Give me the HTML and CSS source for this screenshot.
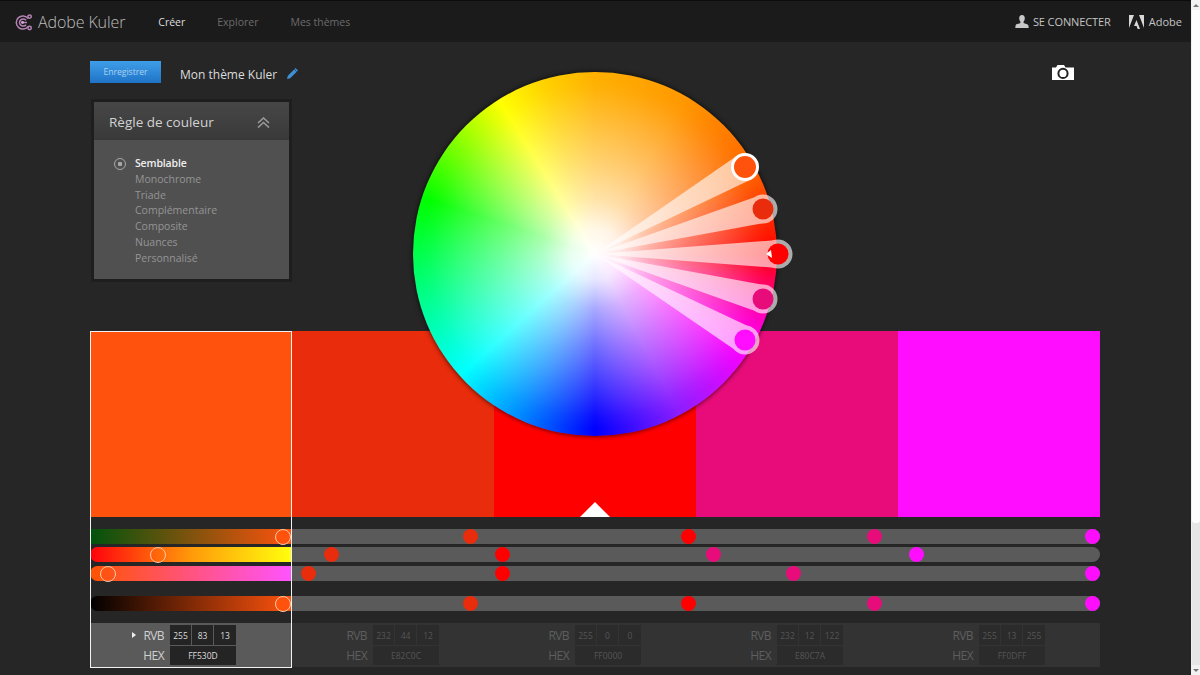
FILE: index.html
```html
<!DOCTYPE html>
<html lang="fr">
<head>
<meta charset="utf-8">
<title>Adobe Kuler</title>
<link rel="stylesheet" href="styles.css">
</head>
<body>
<div class="page">
  <header class="topbar">
    <div class="brand">
      <svg class="logo" viewBox="0 0 18 18" width="18" height="18">
        <g fill="none" stroke="#b583b5" stroke-width="1.5">
          <path d="M13.2 5.6A6.6 6.6 0 1 0 13.2 13.4"/>
          <path d="M11 7.3A3.6 3.6 0 1 0 11 11.7"/>
          <circle cx="14.6" cy="3.6" r="1.7"/>
          <circle cx="14.6" cy="15" r="1.7"/>
          <path d="M6 9.5H12"/>
        </g>
        <circle cx="7.6" cy="9.5" r="1.4" fill="#d7a6d7"/>
      </svg>
      <span class="brand-name">Adobe Kuler</span>
    </div>
    <nav class="nav">
      <a class="nav-link active">Créer</a>
      <a class="nav-link">Explorer</a>
      <a class="nav-link">Mes thèmes</a>
    </nav>
    <div class="account">
      <svg class="user-icon" viewBox="0 0 14 13" width="14" height="13">
        <path d="M7 0C5 0 4.2 1.4 4.2 3.2 4.2 5 5 6 5.4 6.6V8C4 8.8 1 9 .6 10.4L.3 13H13.7L13.4 10.4C13 9 10 8.8 8.6 8V6.6C9 6 9.8 5 9.8 3.2 9.8 1.4 9 0 7 0Z" fill="#c8c8c8"/>
      </svg>
      <span class="signin">SE CONNECTER</span>
      <svg class="adobe-icon" viewBox="0 0 15 14" width="15" height="14">
        <path d="M0 0H5L0 13Z M10 0H15V13Z M7.5 5L11 14H8.7L7.6 11H5Z" fill="#d8d8d8"/>
      </svg>
      <span class="adobe-name">Adobe</span>
    </div>
  </header>

  <main class="workspace">
    <section class="upper">
      <div class="toolbar">
        <button class="save">Enregistrer</button>
        <span class="theme-name">Mon thème Kuler</span>
        <svg class="pencil" viewBox="0 0 13 13" width="13" height="13">
          <path d="M9.6 1 12 3.4 4.2 11.2 1 12 1.8 8.8Z" fill="#3f8fd6"/>
          <path d="M8.4 2.2 10.8 4.6" stroke="#1f2f40" stroke-width=".8"/>
        </svg>
        <svg class="camera" viewBox="0 0 22 15" width="22" height="15">
          <path d="M0 2.5H4L5.5 0H12L13.5 2.5H22V15H0Z" fill="#fff"/>
          <circle cx="11" cy="8.4" r="4.6" fill="#fff" stroke="#222" stroke-width="2"/>
        </svg>
      </div>
      <aside class="rules">
        <div class="rules-head">
          <span class="rules-title">Règle de couleur</span>
          <svg class="chevrons" viewBox="0 0 13 11" width="13" height="11">
            <path d="M1 6 6.5 1 12 6M1 10.5 6.5 5.5 12 10.5" fill="none" stroke="#9a9a9a" stroke-width="1.6"/>
          </svg>
        </div>
        <ul class="rules-list">
          <li class="rule current"><span class="radio"></span>Semblable</li>
          <li class="rule">Monochrome</li>
          <li class="rule">Triade</li>
          <li class="rule">Complémentaire</li>
          <li class="rule">Composite</li>
          <li class="rule">Nuances</li>
          <li class="rule">Personnalisé</li>
        </ul>
      </aside>
    </section>

    <section class="swatches">
      <div class="swatch s1"></div>
      <div class="swatch s2"></div>
      <div class="swatch s3"><span class="base-mark"></span></div>
      <div class="swatch s4"></div>
      <div class="swatch s5"></div>
    </section>

    <section class="sliders">
      <div class="slider row-r">
        <div class="slider-lead lead-r"><span class="handle" style="left:185px"></span></div>
        <div class="slider-rest">
          <span class="dot d2" style="left:171px"></span><span class="dot d3" style="left:389px"></span><span class="dot d4" style="left:575px"></span><span class="dot d5" style="left:793px"></span>
        </div>
      </div>
      <div class="slider row-g">
        <div class="slider-lead lead-g"><span class="handle" style="left:60px"></span></div>
        <div class="slider-rest">
          <span class="dot d2" style="left:32px"></span><span class="dot d3" style="left:203px"></span><span class="dot d4" style="left:414px"></span><span class="dot d5" style="left:617px"></span>
        </div>
      </div>
      <div class="slider row-b">
        <div class="slider-lead lead-b"><span class="handle" style="left:10px"></span></div>
        <div class="slider-rest">
          <span class="dot d2" style="left:9px"></span><span class="dot d3" style="left:203px"></span><span class="dot d4" style="left:494px"></span><span class="dot d5" style="left:793px"></span>
        </div>
      </div>
      <div class="slider row-l">
        <div class="slider-lead lead-l"><span class="handle" style="left:185px"></span></div>
        <div class="slider-rest">
          <span class="dot d2" style="left:171px"></span><span class="dot d3" style="left:389px"></span><span class="dot d4" style="left:575px"></span><span class="dot d5" style="left:793px"></span>
        </div>
      </div>
    </section>

    <section class="values">
      <div class="val selected">
        <span class="val-label"><i class="marker"></i>RVB</span>
        <div class="rgb"><span>255</span><span>83</span><span>13</span></div>
        <span class="val-label">HEX</span>
        <div class="hex">FF530D</div>
      </div>
      <div class="val">
        <span class="val-label">RVB</span>
        <div class="rgb"><span>232</span><span>44</span><span>12</span></div>
        <span class="val-label">HEX</span>
        <div class="hex">E82C0C</div>
      </div>
      <div class="val">
        <span class="val-label">RVB</span>
        <div class="rgb"><span>255</span><span>0</span><span>0</span></div>
        <span class="val-label">HEX</span>
        <div class="hex">FF0000</div>
      </div>
      <div class="val">
        <span class="val-label">RVB</span>
        <div class="rgb"><span>232</span><span>12</span><span>122</span></div>
        <span class="val-label">HEX</span>
        <div class="hex">E80C7A</div>
      </div>
      <div class="val">
        <span class="val-label">RVB</span>
        <div class="rgb"><span>255</span><span>13</span><span>255</span></div>
        <span class="val-label">HEX</span>
        <div class="hex">FF0DFF</div>
      </div>
    </section>

    <div class="selection"></div>

    <div class="wheel-wrap">
      <div class="wheel"></div>
      <svg class="fan" viewBox="0 0 400 400" width="400" height="400">
        <g opacity=".62" fill="#fff">
          <path d="M200 200 357 125.1 343 100.9Z"/>
          <path d="M200 200 371.6 168.5 364.4 141.5Z"/>
          <path d="M200 200 383 186V214Z"/>
          <path d="M200 200 364.4 258.5 371.6 231.5Z"/>
          <path d="M200 200 343 298.1 357 273.9Z"/>
          <circle cx="368" cy="155" r="14.5"/>
          <circle cx="383" cy="200" r="14.5"/>
          <circle cx="368" cy="245" r="14.5"/>
          <circle cx="350" cy="286" r="14.5"/>
        </g>
        <circle cx="350" cy="113" r="12.5" fill="#ff530d" stroke="#fff" stroke-width="3"/>
        <circle cx="368" cy="155" r="10.5" fill="#e82c0c"/>
        <circle cx="383" cy="200" r="10.5" fill="#ff0000"/>
        <circle cx="368" cy="245" r="10.5" fill="#e80c7a"/>
        <circle cx="350" cy="286" r="10.5" fill="#ff0dff"/>
        <path d="M371 200 376 196 377 204Z" fill="#fff"/>
      </svg>
    </div>
  </main>
</div>
<div class="scrollbar">
  <div class="scroll-up"></div>
  <div class="scroll-thumb"></div>
  <div class="scroll-track"></div>
  <div class="scroll-down"></div>
</div>
</body>
</html>
```
FILE: styles.css
```css
* { box-sizing: border-box; }
html, body { margin: 0; padding: 0; height: 100%; }
body {
  display: flex;
  width: 1200px;
  height: 675px;
  overflow: hidden;
  background: #262626;
  font-family: "Open Sans", "Liberation Sans", sans-serif;
  color: #ddd;
}
.page { flex: 0 0 1191px; display: flex; flex-direction: column; }

.topbar {
  display: flex;
  align-items: center;
  height: 42px;
  flex: none;
  background: #1b1b1b;
  border-top: 1px solid #0c0c0c;
  padding: 0 9px 0 15px;
}
.brand { display: flex; align-items: center; }
.logo { display: block; }
.brand-name { margin-left: 5px; font-size: 16px; font-weight: 300; color: #bdbdbd; letter-spacing: -.1px; }
.nav { display: flex; margin-left: 33px; }
.nav-link { font-size: 10.5px; color: #6b6b6b; margin-right: 32px; }
.nav-link.active { color: #dedede; }
.account { display: flex; align-items: center; margin-left: auto; }
.user-icon { margin-right: 4px; }
.signin { font-size: 11px; color: #c4c4c4; letter-spacing: -.1px; }
.adobe-icon { margin-left: 18px; margin-right: 5px; }
.adobe-name { font-size: 11px; color: #c4c4c4; }

.workspace { position: relative; padding: 0 91px 0 90px; flex: 1; }
.upper { height: 289px; padding-top: 19px; }
.toolbar { display: flex; align-items: center; height: 22px; padding-right: 26px; }
.save {
  width: 71px;
  height: 22px;
  padding: 0;
  border: 0;
  background: linear-gradient(#409ee9, #1f73c6);
  color: #a9d2f2;
  font-family: inherit;
  font-size: 8.6px;
}
.theme-name { margin: 4px 0 0 19px; font-size: 12px; color: #dcdcdc; }
.pencil { margin: 3px 0 0 9px; }
.camera { margin: 1px 0 0 auto; }

.rules {
  width: 195px;
  height: 177px;
  margin: 19px 0 0 4px;
  background: #505050;
  box-shadow: 0 0 0 3px #1e1e1e;
}
.rules-head {
  display: flex;
  align-items: center;
  justify-content: space-between;
  height: 38px;
  padding: 2px 19px 0 15px;
  background: linear-gradient(#474747, #393939);
}
.rules-title { font-size: 13.5px; color: #d2d2d2; }
.rules-list { list-style: none; margin: 0; padding: 16px 0 0 41px; }
.rule { position: relative; height: 15.8px; line-height: 15.8px; font-size: 10.5px; color: #959595; }
.rule.current { color: #eee; font-weight: 600; letter-spacing: -.15px; }
.radio {
  position: absolute;
  left: -21px;
  top: 1.5px;
  width: 12px;
  height: 12px;
  border: 1.5px solid #a8a8a8;
  border-radius: 50%;
  background: radial-gradient(circle, #a8a8a8 0 2px, transparent 2.5px);
}

.swatches { display: flex; height: 186px; }
.swatch { position: relative; flex: 0 0 202px; }
.s1 { background: #ff530d; }
.s2 { background: #e82c0c; }
.s3 { background: #ff0000; }
.s4 { background: #e80c7a; }
.s5 { background: #ff0dff; }
.base-mark {
  position: absolute;
  left: 86px;
  bottom: 0;
  width: 0;
  height: 0;
  border-left: 15px solid transparent;
  border-right: 15px solid transparent;
  border-bottom: 15px solid #fff;
}

.sliders { padding-top: 12px; height: 106px; }
.slider { display: flex; height: 15px; margin-bottom: 3px; }
.row-b { margin-top: 4px; }
.row-l { margin-top: 15px; }
.slider-lead { position: relative; flex: 0 0 202px; height: 15px; border-radius: 8px 0 0 8px; }
.slider-rest { position: relative; flex: 1; height: 15px; background: #5a5a5a; border-radius: 0 8px 8px 0; }
.lead-r { background: linear-gradient(90deg, #00530d, #ff530d); border-radius: 2px 0 0 2px; }
.lead-g { background: linear-gradient(90deg, #ff000d, #ff9a0a 50%, #ffff0d); }
.lead-b { background: linear-gradient(90deg, #ff5300, #ff53ff); }
.lead-l { background: linear-gradient(90deg, #000, #ff530d); }
.handle {
  position: absolute;
  top: -.5px;
  width: 16px;
  height: 16px;
  border: 1.5px solid #ffc9a6;
  border-radius: 50%;
  background: #ff530d;
}
.lead-g .handle, .lead-b .handle { background: transparent; }
.dot { position: absolute; top: 0; width: 15px; height: 15px; border-radius: 50%; }
.d2 { background: #e82c0c; }
.d3 { background: #ff0000; }
.d4 { background: #e80c7a; }
.d5 { background: #ff0dff; }

.values { display: flex; height: 44px; }
.val {
  flex: 0 0 202px;
  display: grid;
  grid-template-columns: 75px 66px;
  grid-template-rows: 20px 19px;
  column-gap: 6px;
  row-gap: 1px;
  align-content: start;
  padding-top: 2px;
  background: #333;
  color: #5e5e5e;
}
.val.selected { background: #5a5a5a; color: #d0d0d0; grid-template-columns: 74px 66px; }
.val-label { display: flex; align-items: center; justify-content: flex-end; font-size: 12px; letter-spacing: -.6px; }
.marker {
  width: 0;
  height: 0;
  margin-right: 7px;
  border-left: 4px solid #eee;
  border-top: 3.5px solid transparent;
  border-bottom: 3.5px solid transparent;
}
.rgb { display: grid; grid-template-columns: 21px 21px 22px; column-gap: 1px; }
.rgb span, .hex {
  display: flex;
  align-items: center;
  justify-content: center;
  background: #2b2b2b;
  font-size: 8.5px;
  color: #555;
}
.selected .rgb span, .selected .hex { background: #242424; color: #ddd; }

.selection {
  position: absolute;
  left: 90px;
  top: 289px;
  width: 202px;
  height: 337px;
  border: 1px solid #f2f2f2;
  pointer-events: none;
}

.wheel-wrap { position: absolute; left: 395px; top: 12px; width: 400px; height: 400px; }
.wheel {
  position: absolute;
  left: 18px;
  top: 18px;
  width: 364px;
  height: 364px;
  border-radius: 50%;
  box-shadow: 0 0 4px 1px rgba(0, 0, 0, .55);
  background:
    radial-gradient(circle closest-side, #fff 0, rgba(255, 255, 255, .9) 14%, rgba(255, 255, 255, .66) 30%, rgba(255, 255, 255, .44) 50%, rgba(255, 255, 255, .22) 72%, rgba(255, 255, 255, .04) 90%, rgba(255, 255, 255, 0) 96%),
    conic-gradient(#ffb000 0deg, #ff9800 30deg, #ff6600 62deg, #ff0000 90deg, #ff00a0 106deg, #ff00ff 122deg, #8c1eff 152deg, #0000ff 180deg, #0090ff 206deg, #00ffff 228deg, #00ff78 260deg, #00ff00 288deg, #80ff00 308deg, #ffff00 328deg, #ffd000 344deg, #ffb000 360deg);
}
.fan { position: absolute; left: 0; top: 0; }

.scrollbar { flex: 0 0 9px; display: flex; flex-direction: column; background: #e6e6e6; border-left: 1px solid #f0f0f0; }
.scroll-up, .scroll-down {
  flex: none;
  display: flex;
  align-items: center;
  justify-content: center;
  height: 10px;
  background: #f2f2f2;
}
.scroll-up::before, .scroll-down::before {
  content: "";
  width: 0;
  height: 0;
  border-left: 3px solid transparent;
  border-right: 3px solid transparent;
}
.scroll-up::before { border-bottom: 3px solid #777; }
.scroll-down::before { border-top: 3px solid #777; }
.scroll-thumb { flex: none; height: 513px; background: #fdfdfd; border-radius: 0 0 3px 3px; }
.scroll-track { flex: 1; }
```
